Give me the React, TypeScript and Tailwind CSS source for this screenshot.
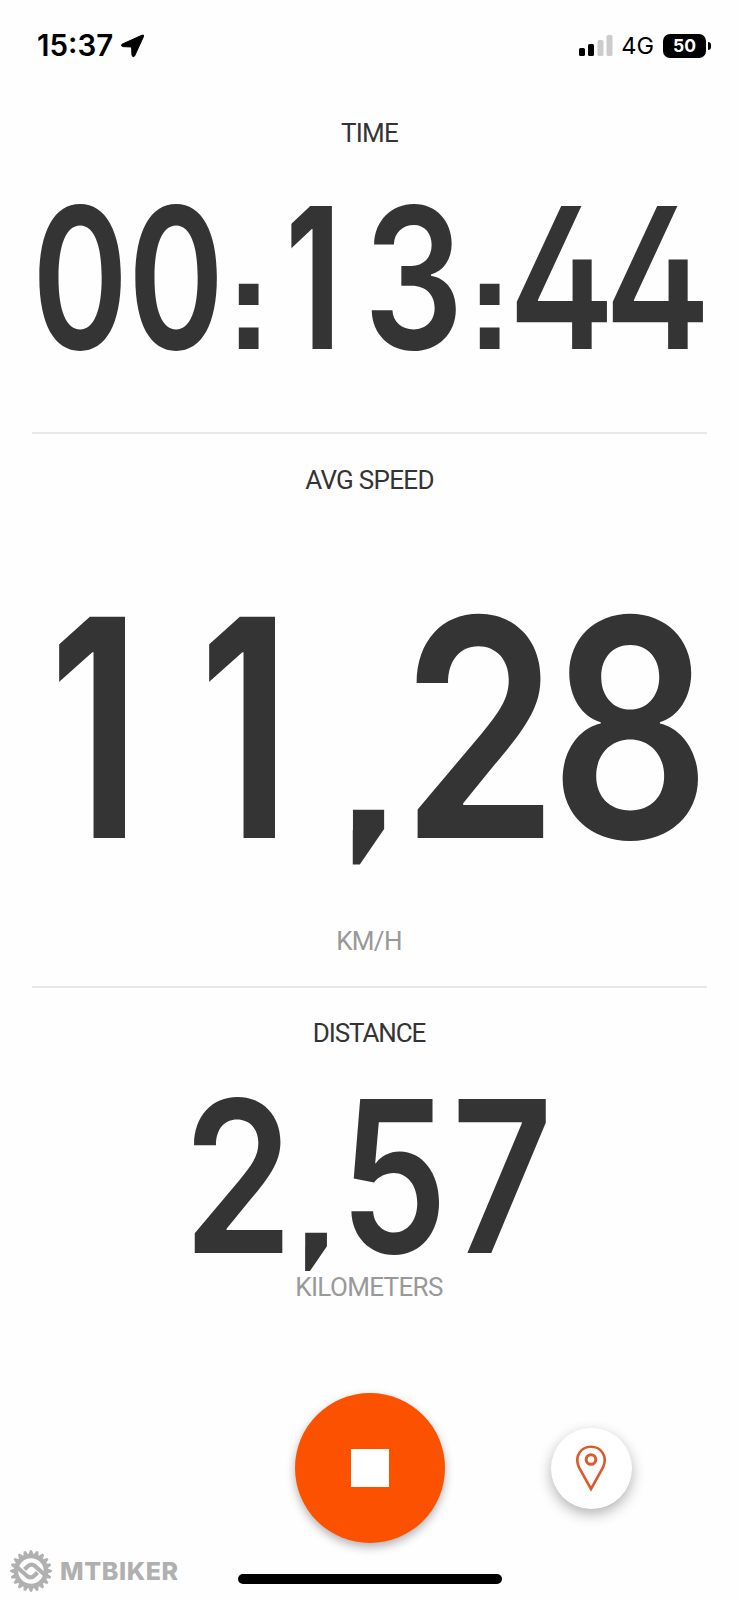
import React from 'react';

interface Glyph {
  char: string;
  // space before the glyph and the width it takes, in px
  gap: number;
  width: number;
  scale: number;
  shift?: number;
}

const TIME: Glyph[] = [
  { char: '0', gap: 0, width: 82, scale: 0.74 },
  { char: '0', gap: 15, width: 81, scale: 0.74, shift: -1 },
  { char: ':', gap: 21, width: 21, scale: 0.56 },
  { char: '1', gap: 32, width: 41, scale: 0.76, shift: -0.5 },
  { char: '3', gap: 40, width: 84, scale: 0.8 },
  { char: ':', gap: 23, width: 21, scale: 0.56 },
  { char: '4', gap: 16, width: 91, scale: 0.81 },
  { char: '4', gap: 5, width: 92, scale: 0.81 },
];

const SPEED: Glyph[] = [
  { char: '1', gap: 0, width: 63, scale: 0.8, shift: -2 },
  { char: '1', gap: 87, width: 63, scale: 0.8, shift: -2 },
  { char: ',', gap: 79, width: 31, scale: 1, shift: -4 },
  { char: '2', gap: 32, width: 126, scale: 0.83 },
  { char: '8', gap: 20, width: 135, scale: 0.825 },
];

const DISTANCE: Glyph[] = [
  { char: '2', gap: 0, width: 88, scale: 0.83 },
  { char: ',', gap: 24, width: 22, scale: 1, shift: -3 },
  { char: '5', gap: 23, width: 88, scale: 0.81, shift: -1 },
  { char: '7', gap: 19, width: 88, scale: 0.83 },
];

// punctuation sits on the baseline and is flatter than the digits
const glyphClass = (char: string) => {
  if (char === ':') return 'origin-[50%_86.4%] scale-y-[0.64] font-extrabold';
  if (char === ',')
    return "origin-[50%_84.6%] scale-y-[0.75] font-normal font-['DejaVu_Sans',sans-serif] [clip-path:inset(0_0_0_0.117em)]";
  if (char === '1') return '[clip-path:inset(0_0_0_calc(50%_-_0.132em))]';
  return '';
};

const Digits: React.FC<{ glyphs: Glyph[]; className: string }> = ({ glyphs, className }) => (
  <div
    className={`flex items-baseline font-semibold leading-none text-[#343434] [font-feature-settings:'cv02','ss07','calt'_0] ${className}`}
  >
    {glyphs.map((g, i) => (
      <span key={i} className="flex shrink-0 justify-center" style={{ width: g.width, marginLeft: g.gap }}>
        <span
          className={`block shrink-0 ${glyphClass(g.char)}`}
          style={{ transform: `translateX(${g.shift ?? 0}px) scaleX(${g.scale})` }}
        >
          {g.char}
        </span>
      </span>
    ))}
  </div>
);

const Label: React.FC<{ className: string; children: React.ReactNode }> = ({ className, children }) => (
  <div className={`text-center font-['Roboto',sans-serif] text-[26px] leading-[30px] ${className}`}>
    {children}
  </div>
);

const TEETH = Array.from({ length: 20 }, (_, i) => i * 18);

const Watermark = () => (
  <div className="flex items-center gap-[8px] text-[#b0b0b0]">
    <svg width="42" height="42" viewBox="-21 -21 42 42">
      {TEETH.map((angle) => (
        <path key={angle} d="M-2.6 -16.5L-1 -20.8H1L2.6 -16.5Z" fill="currentColor" transform={`rotate(${angle})`} />
      ))}
      <circle r="15" fill="none" stroke="currentColor" strokeWidth="4.4" />
      <g fill="none" stroke="currentColor" strokeWidth="4.2">
        <path d="M-6.500 -1.500L-3.500 -4.500Q0 -8 4 -5L14 4" />
        <path d="M6.500 1.500L3.500 4.500Q0 8 -4 5L-14 -4" />
      </g>
    </svg>
    <span className="text-[25px] font-extrabold leading-none tracking-[0.6px]">MTBIKER</span>
  </div>
);

const StatusBar = () => (
  <div className="flex h-[92px] items-center pl-[37px] pr-[28px] text-black">
    <span className="-mt-px text-[29.5px] font-semibold leading-none">15:37</span>
    <svg className="ml-[7px]" width="25" height="24" viewBox="0 0 25 24">
      <path
        d="M2 10.2L22 1.2Q24.4 .4 23.4 2.8L14.6 22Q13 23.600 12 21.6L11.6 13L3 12.600Q.4 11.8 2 10.2Z"
        fill="currentColor"
        stroke="currentColor"
        strokeLinejoin="round"
      />
    </svg>
    <div className="ml-auto flex items-center">
      <svg width="34" height="22" viewBox="0 0 34 22">
        <rect x="0" y="13" width="6" height="8" rx="1.6" fill="#000" />
        <rect x="9" y="9" width="6" height="12" rx="1.6" fill="#000" />
        <rect x="18.5" y="5" width="6" height="16" rx="1.6" fill="#ccc" />
        <rect x="27.5" y="0" width="6" height="21" rx="1.6" fill="#ccc" />
      </svg>
      <span className="ml-[8px] text-[23.5px] leading-none">4G</span>
      <span className="ml-[9px] flex h-6 w-[43px] items-center justify-center rounded-[7px] bg-black text-[17.5px] font-bold leading-none text-white">
        50
      </span>
      <span className="ml-[2px] h-2 w-[3px] rounded-r-full bg-black" />
    </div>
  </div>
);

const App = () => (
  <div className="flex h-[1600px] w-[739px] flex-col overflow-hidden bg-[#fefefe] font-['Inter',sans-serif]">
    <StatusBar />

    <section className="mx-8 h-[342px] border-b-2 border-[#e8e8e8] pt-[26px]">
      <Label className="tracking-[-0.8px] text-[#343434]">TIME</Label>
      <Digits glyphs={TIME} className="mt-[31px] h-[197px] pl-[7px] text-[197px]" />
    </section>

    <section className="mx-8 h-[554px] border-b-2 border-[#e8e8e8] pt-[31px]">
      <Label className="tracking-[-0.7px] text-[#343434]">AVG SPEED</Label>
      <Digits glyphs={SPEED} className="mt-[80px] h-[304px] pl-[30px] text-[304px]" />
      <Label className="mt-[47px] pr-px tracking-[-0.7px] text-[#999]">KM/H</Label>
    </section>

    <section className="mx-8 h-[405px] pt-[30px]">
      <Label className="pr-px tracking-[-1.1px] text-[#343434]">DISTANCE</Label>
      <Digits glyphs={DISTANCE} className="mt-[22px] h-[212px] pl-[162px] text-[212px]" />
      <Label className="-mt-[10px] pr-px tracking-[-0.65px] text-[#999]">KILOMETERS</Label>
    </section>

    <div className="flex h-[150px] items-center pl-[295px]">
      <button className="flex size-[150px] items-center justify-center rounded-full bg-[#fc5200] shadow-[0_4px_10px_rgba(0,0,0,0.3)]">
        <span className="mr-px size-[38px] bg-white" />
      </button>
      <button className="ml-[106px] flex size-[81px] items-center justify-center rounded-full bg-white shadow-[0_5px_14px_rgba(0,0,0,0.3)]">
        <svg className="mr-px" width="30" height="47" viewBox="0 0 30 47" fill="none" stroke="#dd5a2e">
          <path d="M15 44L3 22.5C-2 11 5 1.800 15 1.800S32 11 27 22.500Z" strokeWidth="2.6" />
          <circle cx="15" cy="14.500" r="4.800" strokeWidth="3" />
        </svg>
      </button>
    </div>

    <div className="flex h-[57px] items-start pl-[10px] pt-[7px]">
      <Watermark />
      <div className="ml-auto mr-[237px] mt-6 h-[10px] w-[264px] shrink-0 rounded-full bg-black" />
    </div>
  </div>
);

export default App;
